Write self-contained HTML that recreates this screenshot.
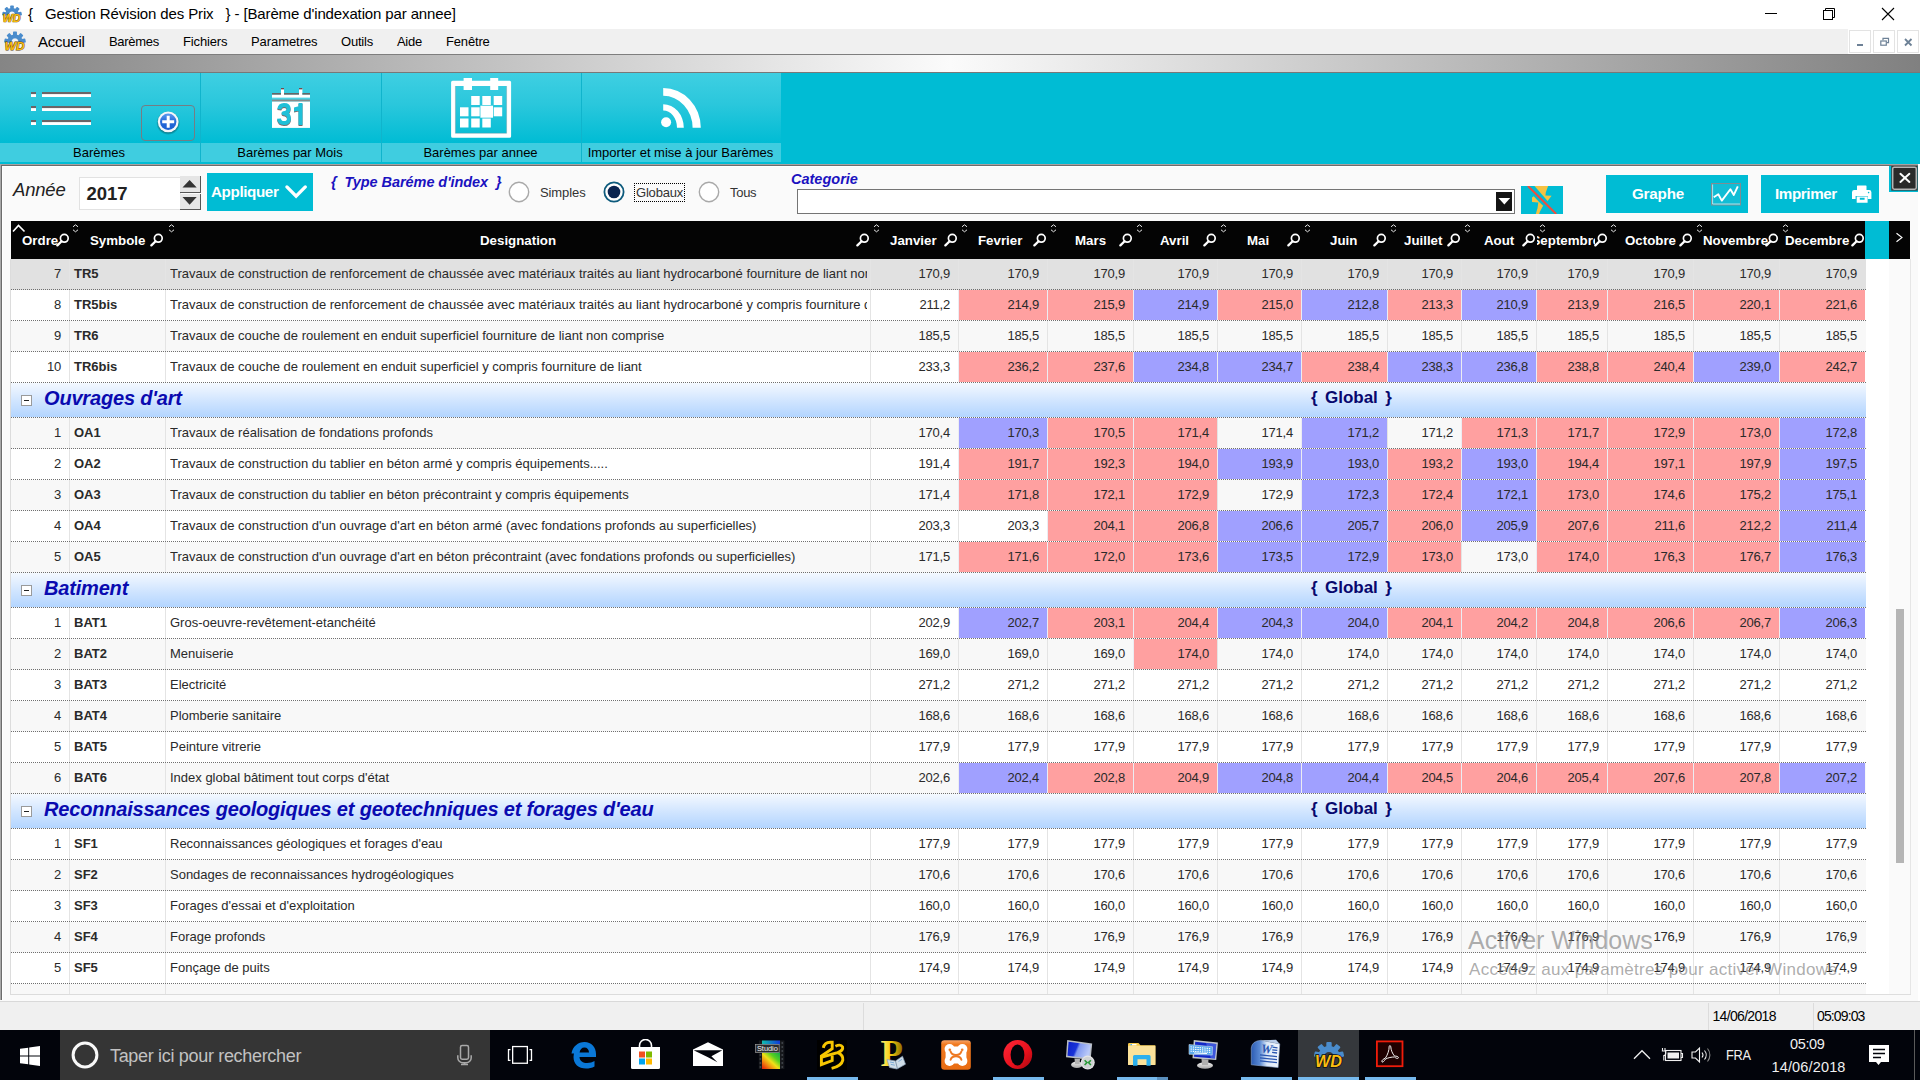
<!DOCTYPE html>
<html><head><meta charset="utf-8"><title>Gestion Revision des Prix</title>
<style>
*{box-sizing:border-box;margin:0;padding:0}
html,body{width:1920px;height:1080px;overflow:hidden;background:#fafafa;font-family:"Liberation Sans",sans-serif;color:#000}
.a{position:absolute}
.t{position:absolute;white-space:nowrap;line-height:1}
/* title */
#title{left:0;top:0;width:1920px;height:29px;background:#fff}
#menu{left:0;top:29px;width:1848px;height:25px;background:#f0f0f0}
#menur{left:1848px;top:29px;width:72px;height:25px;background:#fff}
.mdi{position:absolute;top:30px;width:22px;height:23px;background:#fff;border:1px solid #e3e3e3}
#graybar{left:0;top:54px;width:1920px;height:19px;background:linear-gradient(90deg,#858585 0%,#fbfbfb 49.5%,#808080 100%);border-top:1px solid #7e7e7e;border-bottom:1px solid #787878}
#cyan{left:0;top:73px;width:1920px;height:92px;background:#00bcd4}
/* toolbar */
.tb{position:absolute;top:73px;height:70px;background:linear-gradient(180deg,#3fcfe2 0%,#2ac7dc 45%,#00bcd4 100%)}
.tbl{position:absolute;top:143px;height:19px;background:#3fcde0;text-align:center;font-size:13px;line-height:20.6px;color:#000;padding-right:2px}
/* child window */
#win{left:0;top:164px;width:1920px;height:837px;background:#fafafa}
#status{left:0;top:1001px;width:1920px;height:29px;background:#f0f0f0;border-top:1px solid #d9d9d9}
#taskbar{left:0;top:1030px;width:1920px;height:50px;background:#02040b}

/* table */
#tbl{left:11px;top:221px;width:1855px;height:773px;background:#fff;overflow:hidden}
.r{position:absolute;left:0;width:1855px;height:31px;border-bottom:1px dotted #6f6f6f;font-size:13px;color:#2a2a2a}
.r.o{background:#f8f8f8}.r.s{background:#e1e1e1}
.r i{position:absolute;top:0;height:30px;border-left:1px solid #e4e4e4;font-style:normal;line-height:30.4px;white-space:nowrap;overflow:hidden}
.r .n{text-align:right;padding-right:8px;letter-spacing:-0.2px}
.r .R{background:#ffa0a0}.r .B{background:#a0a0ff}
.r .R,.r .B{border-left-color:#ececf2}
.g{position:absolute;left:0;width:1855px;height:35px;border-bottom:1px dotted #6f6f6f;background:linear-gradient(180deg,#f4f9ff 0%,#eaf3ff 15%,#cfe4ff 55%,#b3d5ff 100%)}
.g b{position:absolute;left:33px;top:5px;font-size:20px;font-style:italic;color:#0a0ab0;line-height:1;white-space:nowrap;letter-spacing:-0.18px}
.g em{position:absolute;left:1300px;top:6px;word-spacing:2.6px;font-size:17px;font-weight:bold;font-style:normal;color:#08086e;line-height:1;white-space:nowrap}
.g u{position:absolute;left:10px;top:12px;width:11px;height:11px;border:1px solid #9a9a9a;background:#fff}
.g u:after{content:"";position:absolute;left:2px;top:4px;width:5px;height:1px;background:#222}
.h{position:absolute;top:234px;font-size:13.3px;font-weight:bold;color:#fff;line-height:1;white-space:nowrap}

</style></head>
<body>
<div class="a" id="title"></div>
<svg class="a" style="left:2.3px;top:5px" width="19.7" height="18" viewBox="1314 1041.500 29.500 26.500" preserveAspectRatio="none"><g fill="#4a8ccc" transform="translate(1329 1057)"><path d="M-11 0a11 11 0 0 1 22 0h-6a5 5 0 0 0-10 0z"/><rect x="-2.700" y="-14.800" width="5.400" height="5.500" rx="1" transform="rotate(-78)"/><rect x="-2.700" y="-14.800" width="5.400" height="5.500" rx="1" transform="rotate(-40)"/><rect x="-2.700" y="-14.800" width="5.400" height="5.500" rx="1" transform="rotate(0)"/><rect x="-2.700" y="-14.800" width="5.400" height="5.500" rx="1" transform="rotate(40)"/><rect x="-2.700" y="-14.800" width="5.400" height="5.500" rx="1" transform="rotate(78)"/></g><circle cx="1329" cy="1055" r="4" fill="#fff" opacity="0.850"/>
<text x="1328.500" y="1067" font-family="Liberation Sans" font-weight="bold" font-style="italic" font-size="15" text-anchor="middle" fill="#f9bc0c" stroke="#5a3e00" stroke-width="1.100" paint-order="stroke" textLength="27" lengthAdjust="spacingAndGlyphs">WD</text></svg>
<div class="t" style="left:28px;top:6.400px;font-size:15px;letter-spacing:-0.13px">{&nbsp;&nbsp;&nbsp;Gestion Révision des Prix&nbsp;&nbsp;&nbsp;} - [Barème d'indexation par annee]</div>
<div class="a" style="left:1765px;top:13px;width:12px;height:1px;background:#000"></div>
<svg class="a" style="left:1822px;top:7px" width="14" height="14" viewBox="0 0 14 14" fill="none" stroke="#000" stroke-width="1"><rect x="1.5" y="3.5" width="9" height="9"/><path d="M3.5 3.5v-2h9v9h-2"/></svg>
<svg class="a" style="left:1881px;top:7px" width="14" height="14" viewBox="0 0 14 14" fill="none" stroke="#000" stroke-width="1.1"><path d="M1 1l12 12M13 1L1 13"/></svg>
<div class="a" id="menu"></div><div class="a" id="menur"></div>
<svg class="a" style="left:4.4px;top:31px" width="21.6" height="20" viewBox="1314 1041.500 29.500 26.500" preserveAspectRatio="none"><g fill="#4a8ccc" transform="translate(1329 1057)"><path d="M-11 0a11 11 0 0 1 22 0h-6a5 5 0 0 0-10 0z"/><rect x="-2.700" y="-14.800" width="5.400" height="5.500" rx="1" transform="rotate(-78)"/><rect x="-2.700" y="-14.800" width="5.400" height="5.500" rx="1" transform="rotate(-40)"/><rect x="-2.700" y="-14.800" width="5.400" height="5.500" rx="1" transform="rotate(0)"/><rect x="-2.700" y="-14.800" width="5.400" height="5.500" rx="1" transform="rotate(40)"/><rect x="-2.700" y="-14.800" width="5.400" height="5.500" rx="1" transform="rotate(78)"/></g><circle cx="1329" cy="1055" r="4" fill="#f4f4f4" opacity="0.850"/>
<text x="1328.500" y="1067" font-family="Liberation Sans" font-weight="bold" font-style="italic" font-size="15" text-anchor="middle" fill="#f9bc0c" stroke="#5a3e00" stroke-width="1.100" paint-order="stroke" textLength="27" lengthAdjust="spacingAndGlyphs">WD</text></svg>
<div class="t" style="left:38px;top:33.5px;font-size:15px;letter-spacing:-0.25px">Accueil</div>
<div class="t" style="left:109px;top:35px;font-size:13px;letter-spacing:-0.3px">Barèmes</div>
<div class="t" style="left:183px;top:35px;font-size:13px;letter-spacing:-0.15px">Fichiers</div>
<div class="t" style="left:251px;top:35px;font-size:13px;letter-spacing:-0.07px">Parametres</div>
<div class="t" style="left:341px;top:35px;font-size:13px;letter-spacing:-0.2px">Outils</div>
<div class="t" style="left:397px;top:35px;font-size:13px;letter-spacing:-0.3px">Aide</div>
<div class="t" style="left:446px;top:35px;font-size:13px;letter-spacing:-0.17px">Fenêtre</div>
<div class="mdi" style="left:1849px"><div class="a" style="left:7px;top:13px;width:6px;height:2px;background:#6d8196"></div></div>
<div class="mdi" style="left:1873px"><svg class="a" style="left:6px;top:6px" width="10" height="10" viewBox="0 0 10 10" fill="none" stroke="#6d8196" stroke-width="1.2"><rect x="0.8" y="4" width="5.5" height="4.2"/><path d="M3 3.2V1.4h5.5v4.2H7"/></svg></div>
<div class="mdi" style="left:1897px"><svg class="a" style="left:6px;top:7px" width="9" height="9" viewBox="0 0 9 9" fill="none" stroke="#6d8196" stroke-width="1.8"><path d="M1 1l6.5 6.5M7.5 1L1 7.5"/></svg></div>
<div class="a" id="graybar"></div>
<div class="a" id="cyan"></div>
<div class="a" id="win"></div>
<div class="a" style="left:0;top:164px;width:1919px;height:1px;background:#a8a0a0"></div>
<div class="a" style="left:1px;top:165px;width:1917px;height:1px;background:#6c6c6c"></div>
<div class="a" style="left:2px;top:166px;width:1916px;height:1px;background:#fff"></div>
<div class="a" style="left:0;top:164px;width:1px;height:836px;background:#a8a8a8"></div>
<div class="a" style="left:1px;top:165px;width:1px;height:835px;background:#6c6c6c"></div>
<div class="a" style="left:2px;top:166px;width:1px;height:834px;background:#fff"></div>
<div class="a" style="left:1918px;top:164px;width:2px;height:837px;background:#fff"></div>
<div class="a" id="status"></div>
<div class="a" style="left:863px;top:1003px;width:1px;height:27px;background:#dcdcdc"></div>
<div class="a" style="left:1708px;top:1003px;width:1px;height:27px;background:#dcdcdc"></div>
<div class="a" style="left:1813px;top:1003px;width:1px;height:27px;background:#dcdcdc"></div>
<div class="t" style="left:1712.500px;top:1009px;font-size:14px;letter-spacing:-0.68px">14/06/2018</div>
<div class="t" style="left:1817px;top:1009px;font-size:14px;letter-spacing:-0.88px">05:09:03</div><div class="tb" style="left:0px;width:200px"></div>
<div class="tbl" style="left:0px;width:200px">Barèmes</div>
<div class="tb" style="left:201px;width:180px"></div>
<div class="tbl" style="left:201px;width:180px">Barèmes par Mois</div>
<div class="tb" style="left:382px;width:199px"></div>
<div class="tbl" style="left:382px;width:199px">Barèmes par annee</div>
<div class="tb" style="left:582px;width:199px"></div>
<div class="tbl" style="left:582px;width:199px">Importer et mise à jour Barèmes</div>
<div class="a" style="left:200px;top:73px;width:1px;height:89px;background:#10b4cc"></div>
<div class="a" style="left:381px;top:73px;width:1px;height:89px;background:#10b4cc"></div>
<div class="a" style="left:581px;top:73px;width:1px;height:89px;background:#10b4cc"></div>
<div class="a" style="left:31px;top:92px;width:5.4px;height:5.4px;background:linear-gradient(180deg,#6a6466 0,#6a6466 30%,#fff 52%,#fff 100%)"></div>
<div class="a" style="left:42px;top:92px;width:49px;height:5.4px;background:linear-gradient(180deg,#6a6466 0,#6a6466 30%,#fff 52%,#fff 100%)"></div>
<div class="a" style="left:31px;top:105.5px;width:5.4px;height:5.4px;background:linear-gradient(180deg,#6a6466 0,#6a6466 30%,#fff 52%,#fff 100%)"></div>
<div class="a" style="left:42px;top:105.5px;width:49px;height:5.4px;background:linear-gradient(180deg,#6a6466 0,#6a6466 30%,#fff 52%,#fff 100%)"></div>
<div class="a" style="left:31px;top:119.5px;width:5.4px;height:5.4px;background:linear-gradient(180deg,#6a6466 0,#6a6466 30%,#fff 52%,#fff 100%)"></div>
<div class="a" style="left:42px;top:119.5px;width:49px;height:5.4px;background:linear-gradient(180deg,#6a6466 0,#6a6466 30%,#fff 52%,#fff 100%)"></div>
<div class="a" style="left:141px;top:105px;width:54px;height:36px;border:1px solid #757d84;border-radius:4px"></div>
<svg class="a" style="left:155px;top:109px" width="26" height="27" viewBox="0 0 26 27">
<defs><linearGradient id="pg" x1="0" y1="0" x2="0" y2="1"><stop offset="0" stop-color="#5b9af0"/><stop offset="0.5" stop-color="#2468d8"/><stop offset="1" stop-color="#1b5fd0"/></linearGradient>
<radialGradient id="ps" cx="0.5" cy="0.5" r="0.5"><stop offset="0.8" stop-color="#000" stop-opacity="0.35"/><stop offset="1" stop-color="#000" stop-opacity="0"/></radialGradient></defs>
<circle cx="13.2" cy="14" r="12" fill="url(#ps)"/>
<circle cx="13.2" cy="12.8" r="10.4" fill="#f4f6fa"/>
<circle cx="13.2" cy="12.8" r="8.2" fill="url(#pg)"/>
<path d="M13.2 6.8v12M7.2 12.8h12" stroke="#fff" stroke-width="3" fill="none"/>
</svg>
<svg class="a" style="left:270px;top:86px" width="44" height="44" viewBox="270 86 44 44">
<rect x="281" y="88" width="3" height="7" fill="#fff"/><rect x="299" y="88" width="3.4" height="7" fill="#fff"/>
<rect x="281" y="88" width="3" height="1.4" fill="#6b4e50"/><rect x="299" y="88" width="3.4" height="1.4" fill="#6b4e50"/>
<rect x="272" y="93" width="9" height="1.8" fill="#666"/><rect x="284" y="93" width="15" height="1.8" fill="#666"/><rect x="302.4" y="93" width="7.6" height="1.8" fill="#666"/>
<rect x="272" y="94.8" width="38" height="3" fill="#fff"/>
<rect x="272" y="97.8" width="38" height="1.8" fill="#4fd2e4"/>
<rect x="272" y="99.6" width="38" height="2" fill="#8a8a8a"/>
<rect x="272" y="101.6" width="38" height="26.3" fill="#fff"/>
<g fill="none" stroke-width="4" stroke-linejoin="round"><path id="d3" d="M279.300 109.300Q279.800 105 284 105Q288.600 105 288.600 108.800Q288.600 112.600 283.500 113.300Q289 113.800 289 118.400Q289 123 284 123Q279.400 123 279 118.600" stroke="#756a6c" transform="translate(0 1)"/><path d="M279.300 109.300Q279.800 105 284 105Q288.600 105 288.600 108.800Q288.600 112.600 283.500 113.300Q289 113.800 289 118.400Q289 123 284 123Q279.400 123 279 118.600" stroke="#1fc0d8"/></g>
<path d="M298.500 104h4v22h-4zM294 108.200l4.500-1.200v4.600l-4.500 .800z" fill="#756a6c"/><path d="M298.500 103h4v22h-4zM294 107.400l4.500-1.200v4.600l-4.500 .800z" fill="#1fc0d8"/>
</svg>
<svg class="a" style="left:445px;top:74px" width="72" height="68" viewBox="445 74 72 68">
<g fill="#fff"><path fill-rule="evenodd" d="M452.6 80.8h57a1.5 1.5 0 0 1 1.5 1.5v54a1.5 1.5 0 0 1-1.5 1.5h-57a1.5 1.5 0 0 1-1.5-1.5v-54a1.5 1.5 0 0 1 1.5-1.5zM455.4 86v47.3h51.2V86z"/>
<rect x="463.6" y="78" width="8.4" height="12"/><rect x="490.2" y="78" width="8" height="12"/>
<rect x="471.2" y="96" width="8.5" height="9"/><rect x="482.3" y="96" width="8.5" height="9"/><rect x="493.7" y="96" width="8.5" height="9"/><rect x="460" y="107.3" width="8.5" height="9"/><rect x="471.2" y="107.3" width="8.5" height="9"/><rect x="493.7" y="107.3" width="8.5" height="9"/><rect x="460" y="118.5" width="8.5" height="9"/><rect x="471.2" y="118.5" width="8.5" height="9"/><rect x="482.3" y="118.5" width="8.5" height="9"/><rect x="480.4" y="105.7" width="12.6" height="12"/></g>
<path d="M455.4 86v47.3h51.2V86" fill="none" stroke="#7a8a90" stroke-width="0.5" opacity="0.7"/>
</svg>
<svg class="a" style="left:656px;top:84px" width="50" height="48" viewBox="656 84 50 48" fill="#fff">
<circle cx="666.1" cy="122.2" r="5"/>
<path d="M663.200 88A37.600 39.800 0 0 1 700.800 127.800L692.600 127.800A29.400 32 0 0 0 663.200 95.800Z"/>
<path d="M663.200 104.200A20.600 23.600 0 0 1 683.800 127.800L677 127.800A13.800 17.300 0 0 0 663.200 110.500Z"/>
</svg><div class="t" style="left:13px;top:181px;font-size:18.5px;font-style:italic;color:#222;letter-spacing:-0.2px">Année</div>
<div class="a" style="left:79px;top:177px;width:102px;height:33px;background:#fff;border:1px solid #e2e2e2"></div>
<div class="t" style="left:86.5px;top:185px;font-size:18.5px;font-weight:bold;color:#222">2017</div>
<div class="a" style="left:180px;top:176px;width:21px;height:17px;background:#e5e5e5;border-right:1px solid #555;border-bottom:1px solid #555"></div>
<div class="a" style="left:180px;top:194px;width:21px;height:16px;background:#e5e5e5;border-right:1px solid #555;border-bottom:1px solid #555"></div>
<svg class="a" style="left:180px;top:176px" width="21" height="34" viewBox="0 0 21 34"><path d="M2.5 11.5L9.6 4l7.1 7.5zM2.5 21h14.2L9.6 28.7z" fill="#333"/></svg>
<div class="a" style="left:207px;top:173px;width:106px;height:38px;background:#00bcd4"></div>
<div class="t" style="left:211px;top:184px;font-size:15.2px;font-weight:bold;color:#fff;letter-spacing:-0.38px">Appliquer</div>
<svg class="a" style="left:284px;top:182px" width="24" height="18" viewBox="0 0 24 18"><path d="M2.900 4.900L12.100 14.200L21.300 4.900" fill="none" stroke="#fff" stroke-width="3.300" stroke-linecap="round" stroke-linejoin="miter"/></svg>
<div class="t" style="left:331px;top:175px;font-size:14.5px;font-weight:bold;font-style:italic;color:#1a12c0;letter-spacing:-0.06px">{&nbsp; Type Baréme d'index&nbsp; }</div>
<svg class="a" style="left:506.5px;top:180px" width="24" height="24" viewBox="0 0 24 24"><circle cx="12" cy="12" r="9.7" fill="#fff" stroke="#a9a9a9" stroke-width="1.4"/></svg>
<div class="t" style="left:540px;top:186px;font-size:13px;color:#333;letter-spacing:-0.1px">Simples</div>
<svg class="a" style="left:601.5px;top:180px" width="24" height="24" viewBox="0 0 24 24"><circle cx="12" cy="12" r="9.6" fill="#fff" stroke="#0d5a7c" stroke-width="1.8"/><circle cx="12" cy="12" r="6.300" fill="#0a2450"/></svg>
<div class="a" style="left:634px;top:183px;width:51px;height:19px;border:1px dotted #000"></div>
<div class="t" style="left:636px;top:186px;font-size:13px;color:#333;letter-spacing:-0.2px">Globaux</div>
<svg class="a" style="left:696.5px;top:180px" width="24" height="24" viewBox="0 0 24 24"><circle cx="12" cy="12" r="9.7" fill="#fff" stroke="#a9a9a9" stroke-width="1.4"/></svg>
<div class="t" style="left:730px;top:186px;font-size:13px;color:#333;letter-spacing:-0.3px">Tous</div>
<div class="t" style="left:791px;top:172px;font-size:14.5px;font-weight:bold;font-style:italic;color:#1a12c0">Categorie</div>
<div class="a" style="left:797px;top:189px;width:718px;height:25px;background:#fff;border:1px solid #747474"></div>
<div class="a" style="left:1496px;top:192px;width:16px;height:19px;background:#141414"></div>
<svg class="a" style="left:1496px;top:192px" width="17" height="19" viewBox="0 0 17 19"><path d="M2.500 5.900h11.700l-5.850 6.500z" fill="#fff"/></svg>
<svg class="a" style="left:1521px;top:186px" width="42" height="28" viewBox="0 0 42 28"><rect width="42" height="28" fill="#00bcd4"/>
<path d="M13.500 0L27.100 0L24.800 6.500L24.400 9.400L30.600 9.800L26.600 15Z" fill="#f5c242"/>
<path d="M11 11.600L12.700 10.300L18.100 16L22.100 19.800L19 25.600L18.100 28L14.800 28L16.500 22.300L17.300 16.600L11 16Z" fill="#f5c242"/>
<path d="M6.900 0L35.200 28" stroke="#f04c3c" stroke-width="2"/></svg>
<div class="a" style="left:1606px;top:175px;width:142px;height:38px;background:#00bcd4"></div>
<div class="t" style="left:1632px;top:186px;font-size:15.2px;font-weight:bold;color:#fff;letter-spacing:-0.2px">Graphe</div>
<svg class="a" style="left:1711px;top:183px" width="30" height="23" viewBox="1711 183 30 23"><rect x="1711.500" y="183.500" width="29" height="21.500" fill="#12bdd5" stroke="#7f8c92" stroke-width="1"/><path d="M1712.600 184.500v19.500h27.500" fill="none" stroke="#d8eef2" stroke-width="0.800"/>
<path d="M1713.750 197.200L1718.300 194.300L1721.800 200.600L1730.400 189.200L1733.800 194.900L1737.800 186.300" fill="none" stroke="#fff" stroke-width="1.900" stroke-linejoin="round"/></svg>
<div class="a" style="left:1761px;top:175px;width:118px;height:38px;background:#00bcd4"></div>
<div class="t" style="left:1775px;top:186px;font-size:15.2px;font-weight:bold;color:#fff;letter-spacing:-0.4px">Imprimer</div>
<svg class="a" style="left:1851px;top:184px" width="22" height="20" viewBox="1851 184 22 20" fill="#fff"><rect x="1857" y="185.500" width="9.500" height="5" rx="0.600"/>
<path d="M1854.200 190h15a2.200 2.200 0 0 1 2.200 2.200v6.800h-3.600v-3h-12.200v3h-3.600v-6.800a2.200 2.200 0 0 1 2.200-2.200z"/><path d="M1856.700 196.500h10.900v6.200h-10.900zM1859.800 197.800v2h4.800v-2z" fill-rule="evenodd"/><circle cx="1868.600" cy="192.600" r="0.800" fill="#00bcd4"/></svg>
<svg class="a" style="left:1889px;top:165px" width="30" height="28" viewBox="1889 165 30 28"><rect x="1889" y="166" width="29" height="26" fill="#00bcd4"/><rect x="1891.250" y="166" width="26.450" height="24.600" fill="#3a3636"/><rect x="1892.700" y="167.200" width="23.600" height="22" rx="1.600" fill="#2b2b2b" stroke="#b6b6b6" stroke-width="1.500"/><path d="M1900.400 173.800L1909.400 181.900M1909.400 173.800L1900.400 181.900" stroke="#fff" stroke-width="2" stroke-linecap="round"/></svg><div class="a" style="left:11px;top:221px;width:1855px;height:38px;background:#040404"></div>
<div class="a" style="left:1865px;top:221px;width:24px;height:38px;background:#00bcd4"></div>
<div class="a" style="left:1889px;top:221px;width:21px;height:38px;background:#040404"></div>
<svg class="a" style="left:1894.5px;top:232.3px" width="9" height="11" viewBox="0 0 9 11"><path d="M1.5 1.2L7 5.5 1.5 9.8" fill="none" stroke="#fff" stroke-width="1.1"/></svg>
<div class="a" style="left:1866px;top:259px;width:23px;height:735px;background:#fff"></div>
<div class="a" style="left:1910px;top:259px;width:1px;height:735px;background:#e6e6e6"></div>
<div class="a" style="left:1896px;top:609px;width:7.5px;height:254px;background:#b5b5b5"></div>
<div class="a" style="left:1866px;top:994px;width:45px;height:1px;background:#dedede"></div>
<div class="h" style="left:22px">Ordre</div>
<div class="h" style="left:90px">Symbole</div>
<div class="h" style="left:480px">Designation</div>
<div class="h" style="left:890px">Janvier</div>
<div class="h" style="left:978px">Fevrier</div>
<div class="h" style="left:1075px">Mars</div>
<div class="h" style="left:1160px">Avril</div>
<div class="h" style="left:1247px">Mai</div>
<div class="h" style="left:1330px">Juin</div>
<div class="h" style="left:1404px">Juillet</div>
<div class="h" style="left:1484px">Aout</div>
<div class="h" style="left:1537px;width:58px;height:16px;overflow:hidden"><span style="margin-left:-5.5px">Septembre</span></div>
<div class="h" style="left:1625px">Octobre</div>
<div class="h" style="left:1703px">Novembre</div>
<div class="h" style="left:1785px">Decembre</div>
<svg class="a" style="left:11.500px;top:223.800px" width="14" height="9" viewBox="0 0 14 9"><path d="M1 7.5L6.5 1.5 12.5 7.5" fill="none" stroke="#fff" stroke-width="1.6"/></svg>
<svg class="a" style="left:56px;top:233px" width="14" height="14" viewBox="0 0 14 14"><circle cx="8.3" cy="5.3" r="3.9" fill="none" stroke="#fff" stroke-width="1.7"/><path d="M5.6 8.2L1.4 12.4" stroke="#fff" stroke-width="2.3" stroke-linecap="round"/></svg>
<svg class="a" style="left:150px;top:233px" width="14" height="14" viewBox="0 0 14 14"><circle cx="8.3" cy="5.3" r="3.9" fill="none" stroke="#fff" stroke-width="1.7"/><path d="M5.6 8.2L1.4 12.4" stroke="#fff" stroke-width="2.3" stroke-linecap="round"/></svg>
<svg class="a" style="left:856px;top:233px" width="14" height="14" viewBox="0 0 14 14"><circle cx="8.3" cy="5.3" r="3.9" fill="none" stroke="#fff" stroke-width="1.7"/><path d="M5.6 8.2L1.4 12.4" stroke="#fff" stroke-width="2.3" stroke-linecap="round"/></svg>
<svg class="a" style="left:944px;top:233px" width="14" height="14" viewBox="0 0 14 14"><circle cx="8.3" cy="5.3" r="3.9" fill="none" stroke="#fff" stroke-width="1.7"/><path d="M5.6 8.2L1.4 12.4" stroke="#fff" stroke-width="2.3" stroke-linecap="round"/></svg>
<svg class="a" style="left:1033px;top:233px" width="14" height="14" viewBox="0 0 14 14"><circle cx="8.3" cy="5.3" r="3.9" fill="none" stroke="#fff" stroke-width="1.7"/><path d="M5.6 8.2L1.4 12.4" stroke="#fff" stroke-width="2.3" stroke-linecap="round"/></svg>
<svg class="a" style="left:1119px;top:233px" width="14" height="14" viewBox="0 0 14 14"><circle cx="8.3" cy="5.3" r="3.9" fill="none" stroke="#fff" stroke-width="1.7"/><path d="M5.6 8.2L1.4 12.4" stroke="#fff" stroke-width="2.3" stroke-linecap="round"/></svg>
<svg class="a" style="left:1203px;top:233px" width="14" height="14" viewBox="0 0 14 14"><circle cx="8.3" cy="5.3" r="3.9" fill="none" stroke="#fff" stroke-width="1.7"/><path d="M5.6 8.2L1.4 12.4" stroke="#fff" stroke-width="2.3" stroke-linecap="round"/></svg>
<svg class="a" style="left:1287px;top:233px" width="14" height="14" viewBox="0 0 14 14"><circle cx="8.3" cy="5.3" r="3.9" fill="none" stroke="#fff" stroke-width="1.7"/><path d="M5.6 8.2L1.4 12.4" stroke="#fff" stroke-width="2.3" stroke-linecap="round"/></svg>
<svg class="a" style="left:1373px;top:233px" width="14" height="14" viewBox="0 0 14 14"><circle cx="8.3" cy="5.3" r="3.9" fill="none" stroke="#fff" stroke-width="1.7"/><path d="M5.6 8.2L1.4 12.4" stroke="#fff" stroke-width="2.3" stroke-linecap="round"/></svg>
<svg class="a" style="left:1447px;top:233px" width="14" height="14" viewBox="0 0 14 14"><circle cx="8.3" cy="5.3" r="3.9" fill="none" stroke="#fff" stroke-width="1.7"/><path d="M5.6 8.2L1.4 12.4" stroke="#fff" stroke-width="2.3" stroke-linecap="round"/></svg>
<svg class="a" style="left:1522px;top:233px" width="14" height="14" viewBox="0 0 14 14"><circle cx="8.3" cy="5.3" r="3.9" fill="none" stroke="#fff" stroke-width="1.7"/><path d="M5.6 8.2L1.4 12.4" stroke="#fff" stroke-width="2.3" stroke-linecap="round"/></svg>
<svg class="a" style="left:1594px;top:233px" width="14" height="14" viewBox="0 0 14 14"><circle cx="8.3" cy="5.3" r="3.9" fill="none" stroke="#fff" stroke-width="1.7"/><path d="M5.6 8.2L1.4 12.4" stroke="#fff" stroke-width="2.3" stroke-linecap="round"/></svg>
<svg class="a" style="left:1679px;top:233px" width="14" height="14" viewBox="0 0 14 14"><circle cx="8.3" cy="5.3" r="3.9" fill="none" stroke="#fff" stroke-width="1.7"/><path d="M5.6 8.2L1.4 12.4" stroke="#fff" stroke-width="2.3" stroke-linecap="round"/></svg>
<svg class="a" style="left:1765px;top:233px" width="14" height="14" viewBox="0 0 14 14"><circle cx="8.3" cy="5.3" r="3.9" fill="none" stroke="#fff" stroke-width="1.7"/><path d="M5.6 8.2L1.4 12.4" stroke="#fff" stroke-width="2.3" stroke-linecap="round"/></svg>
<svg class="a" style="left:1851px;top:233px" width="14" height="14" viewBox="0 0 14 14"><circle cx="8.3" cy="5.3" r="3.9" fill="none" stroke="#fff" stroke-width="1.7"/><path d="M5.6 8.2L1.4 12.4" stroke="#fff" stroke-width="2.3" stroke-linecap="round"/></svg>
<svg class="a" style="left:72px;top:224px" width="7" height="9" viewBox="0 0 7 9"><path d="M1 2.8L3.5 0.8 6 2.8M1 5.8L3.5 7.8 6 5.8" fill="none" stroke="#e8e8e8" stroke-width="1"/></svg>
<svg class="a" style="left:168px;top:224px" width="7" height="9" viewBox="0 0 7 9"><path d="M1 2.8L3.5 0.8 6 2.8M1 5.8L3.5 7.8 6 5.8" fill="none" stroke="#e8e8e8" stroke-width="1"/></svg>
<svg class="a" style="left:873px;top:224px" width="7" height="9" viewBox="0 0 7 9"><path d="M1 2.8L3.5 0.8 6 2.8M1 5.8L3.5 7.8 6 5.8" fill="none" stroke="#e8e8e8" stroke-width="1"/></svg>
<svg class="a" style="left:961px;top:224px" width="7" height="9" viewBox="0 0 7 9"><path d="M1 2.8L3.5 0.8 6 2.8M1 5.8L3.5 7.8 6 5.8" fill="none" stroke="#e8e8e8" stroke-width="1"/></svg>
<svg class="a" style="left:1050px;top:224px" width="7" height="9" viewBox="0 0 7 9"><path d="M1 2.8L3.5 0.8 6 2.8M1 5.8L3.5 7.8 6 5.8" fill="none" stroke="#e8e8e8" stroke-width="1"/></svg>
<svg class="a" style="left:1136px;top:224px" width="7" height="9" viewBox="0 0 7 9"><path d="M1 2.8L3.5 0.8 6 2.8M1 5.8L3.5 7.8 6 5.8" fill="none" stroke="#e8e8e8" stroke-width="1"/></svg>
<svg class="a" style="left:1220px;top:224px" width="7" height="9" viewBox="0 0 7 9"><path d="M1 2.8L3.5 0.8 6 2.8M1 5.8L3.5 7.8 6 5.8" fill="none" stroke="#e8e8e8" stroke-width="1"/></svg>
<svg class="a" style="left:1304px;top:224px" width="7" height="9" viewBox="0 0 7 9"><path d="M1 2.8L3.5 0.8 6 2.8M1 5.8L3.5 7.8 6 5.8" fill="none" stroke="#e8e8e8" stroke-width="1"/></svg>
<svg class="a" style="left:1390px;top:224px" width="7" height="9" viewBox="0 0 7 9"><path d="M1 2.8L3.5 0.8 6 2.8M1 5.8L3.5 7.8 6 5.8" fill="none" stroke="#e8e8e8" stroke-width="1"/></svg>
<svg class="a" style="left:1464px;top:224px" width="7" height="9" viewBox="0 0 7 9"><path d="M1 2.8L3.5 0.8 6 2.8M1 5.8L3.5 7.8 6 5.8" fill="none" stroke="#e8e8e8" stroke-width="1"/></svg>
<svg class="a" style="left:1539px;top:224px" width="7" height="9" viewBox="0 0 7 9"><path d="M1 2.8L3.5 0.8 6 2.8M1 5.8L3.5 7.8 6 5.8" fill="none" stroke="#e8e8e8" stroke-width="1"/></svg>
<svg class="a" style="left:1610px;top:224px" width="7" height="9" viewBox="0 0 7 9"><path d="M1 2.8L3.5 0.8 6 2.8M1 5.8L3.5 7.8 6 5.8" fill="none" stroke="#e8e8e8" stroke-width="1"/></svg>
<svg class="a" style="left:1696px;top:224px" width="7" height="9" viewBox="0 0 7 9"><path d="M1 2.8L3.5 0.8 6 2.8M1 5.8L3.5 7.8 6 5.8" fill="none" stroke="#e8e8e8" stroke-width="1"/></svg>
<svg class="a" style="left:1782px;top:224px" width="7" height="9" viewBox="0 0 7 9"><path d="M1 2.8L3.5 0.8 6 2.8M1 5.8L3.5 7.8 6 5.8" fill="none" stroke="#e8e8e8" stroke-width="1"/></svg>
<div class="a" id="tbl" style="left:10px;top:259px;width:1856px;height:736px;border-left:1px solid #dcdcdc;border-bottom:1px solid #dcdcdc">
<div class="r s" style="top:0px"><i class="n" style="left:0px;width:58px;border-left:0;padding-right:8px">7</i><i style="left:58px;width:96px;padding-left:4px"><b>TR5</b></i><i style="left:154px;width:705px;padding-left:4px"><span style="display:block;width:697px;overflow:hidden;letter-spacing:-0.005px">Travaux de construction de renforcement de chaussée avec matériaux traités au liant hydrocarboné fourniture de liant non comprise</span></i><i class="n" style="left:859px;width:88px">170,9</i><i class="n" style="left:947px;width:89px">170,9</i><i class="n" style="left:1036px;width:86px">170,9</i><i class="n" style="left:1122px;width:84px">170,9</i><i class="n" style="left:1206px;width:84px">170,9</i><i class="n" style="left:1290px;width:86px">170,9</i><i class="n" style="left:1376px;width:74px">170,9</i><i class="n" style="left:1450px;width:75px">170,9</i><i class="n" style="left:1525px;width:71px">170,9</i><i class="n" style="left:1596px;width:86px">170,9</i><i class="n" style="left:1682px;width:86px">170,9</i><i class="n" style="left:1768px;width:86px">170,9</i></div>
<div class="r" style="top:31px"><i class="n" style="left:0px;width:58px;border-left:0;padding-right:8px">8</i><i style="left:58px;width:96px;padding-left:4px"><b>TR5bis</b></i><i style="left:154px;width:705px;padding-left:4px"><span style="display:block;width:697px;overflow:hidden;letter-spacing:-0.005px">Travaux de construction de renforcement de chaussée avec matériaux traités au liant hydrocarboné y compris fourniture de liant</span></i><i class="n" style="left:859px;width:88px">211,2</i><i class="n R" style="left:947px;width:89px">214,9</i><i class="n R" style="left:1036px;width:86px">215,9</i><i class="n B" style="left:1122px;width:84px">214,9</i><i class="n R" style="left:1206px;width:84px">215,0</i><i class="n B" style="left:1290px;width:86px">212,8</i><i class="n R" style="left:1376px;width:74px">213,3</i><i class="n B" style="left:1450px;width:75px">210,9</i><i class="n R" style="left:1525px;width:71px">213,9</i><i class="n R" style="left:1596px;width:86px">216,5</i><i class="n R" style="left:1682px;width:86px">220,1</i><i class="n R" style="left:1768px;width:86px">221,6</i></div>
<div class="r o" style="top:62px"><i class="n" style="left:0px;width:58px;border-left:0;padding-right:8px">9</i><i style="left:58px;width:96px;padding-left:4px"><b>TR6</b></i><i style="left:154px;width:705px;padding-left:4px"><span style="display:block;width:697px;overflow:hidden;letter-spacing:-0.005px">Travaux de couche de roulement en enduit superficiel fourniture de liant non comprise</span></i><i class="n" style="left:859px;width:88px">185,5</i><i class="n" style="left:947px;width:89px">185,5</i><i class="n" style="left:1036px;width:86px">185,5</i><i class="n" style="left:1122px;width:84px">185,5</i><i class="n" style="left:1206px;width:84px">185,5</i><i class="n" style="left:1290px;width:86px">185,5</i><i class="n" style="left:1376px;width:74px">185,5</i><i class="n" style="left:1450px;width:75px">185,5</i><i class="n" style="left:1525px;width:71px">185,5</i><i class="n" style="left:1596px;width:86px">185,5</i><i class="n" style="left:1682px;width:86px">185,5</i><i class="n" style="left:1768px;width:86px">185,5</i></div>
<div class="r" style="top:93px"><i class="n" style="left:0px;width:58px;border-left:0;padding-right:8px">10</i><i style="left:58px;width:96px;padding-left:4px"><b>TR6bis</b></i><i style="left:154px;width:705px;padding-left:4px"><span style="display:block;width:697px;overflow:hidden;letter-spacing:-0.005px">Travaux de couche de roulement en enduit superficiel y compris fourniture de liant</span></i><i class="n" style="left:859px;width:88px">233,3</i><i class="n R" style="left:947px;width:89px">236,2</i><i class="n R" style="left:1036px;width:86px">237,6</i><i class="n B" style="left:1122px;width:84px">234,8</i><i class="n B" style="left:1206px;width:84px">234,7</i><i class="n R" style="left:1290px;width:86px">238,4</i><i class="n B" style="left:1376px;width:74px">238,3</i><i class="n B" style="left:1450px;width:75px">236,8</i><i class="n R" style="left:1525px;width:71px">238,8</i><i class="n R" style="left:1596px;width:86px">240,4</i><i class="n B" style="left:1682px;width:86px">239,0</i><i class="n R" style="left:1768px;width:86px">242,7</i></div>
<div class="g" style="top:124px"><u></u><b>Ouvrages d'art</b><em>{ Global }</em></div>
<div class="r o" style="top:159px"><i class="n" style="left:0px;width:58px;border-left:0;padding-right:8px">1</i><i style="left:58px;width:96px;padding-left:4px"><b>OA1</b></i><i style="left:154px;width:705px;padding-left:4px"><span style="display:block;width:697px;overflow:hidden;letter-spacing:-0.005px">Travaux de réalisation de fondations profonds</span></i><i class="n" style="left:859px;width:88px">170,4</i><i class="n B" style="left:947px;width:89px">170,3</i><i class="n R" style="left:1036px;width:86px">170,5</i><i class="n R" style="left:1122px;width:84px">171,4</i><i class="n" style="left:1206px;width:84px">171,4</i><i class="n B" style="left:1290px;width:86px">171,2</i><i class="n" style="left:1376px;width:74px">171,2</i><i class="n R" style="left:1450px;width:75px">171,3</i><i class="n R" style="left:1525px;width:71px">171,7</i><i class="n R" style="left:1596px;width:86px">172,9</i><i class="n R" style="left:1682px;width:86px">173,0</i><i class="n B" style="left:1768px;width:86px">172,8</i></div>
<div class="r" style="top:190px"><i class="n" style="left:0px;width:58px;border-left:0;padding-right:8px">2</i><i style="left:58px;width:96px;padding-left:4px"><b>OA2</b></i><i style="left:154px;width:705px;padding-left:4px"><span style="display:block;width:697px;overflow:hidden;letter-spacing:-0.005px">Travaux de construction du tablier en béton armé y compris équipements.....</span></i><i class="n" style="left:859px;width:88px">191,4</i><i class="n R" style="left:947px;width:89px">191,7</i><i class="n R" style="left:1036px;width:86px">192,3</i><i class="n R" style="left:1122px;width:84px">194,0</i><i class="n B" style="left:1206px;width:84px">193,9</i><i class="n B" style="left:1290px;width:86px">193,0</i><i class="n R" style="left:1376px;width:74px">193,2</i><i class="n B" style="left:1450px;width:75px">193,0</i><i class="n R" style="left:1525px;width:71px">194,4</i><i class="n R" style="left:1596px;width:86px">197,1</i><i class="n R" style="left:1682px;width:86px">197,9</i><i class="n B" style="left:1768px;width:86px">197,5</i></div>
<div class="r o" style="top:221px"><i class="n" style="left:0px;width:58px;border-left:0;padding-right:8px">3</i><i style="left:58px;width:96px;padding-left:4px"><b>OA3</b></i><i style="left:154px;width:705px;padding-left:4px"><span style="display:block;width:697px;overflow:hidden;letter-spacing:-0.005px">Travaux de construction du tablier en béton précontraint y compris équipements</span></i><i class="n" style="left:859px;width:88px">171,4</i><i class="n R" style="left:947px;width:89px">171,8</i><i class="n R" style="left:1036px;width:86px">172,1</i><i class="n R" style="left:1122px;width:84px">172,9</i><i class="n" style="left:1206px;width:84px">172,9</i><i class="n B" style="left:1290px;width:86px">172,3</i><i class="n R" style="left:1376px;width:74px">172,4</i><i class="n B" style="left:1450px;width:75px">172,1</i><i class="n R" style="left:1525px;width:71px">173,0</i><i class="n R" style="left:1596px;width:86px">174,6</i><i class="n R" style="left:1682px;width:86px">175,2</i><i class="n B" style="left:1768px;width:86px">175,1</i></div>
<div class="r" style="top:252px"><i class="n" style="left:0px;width:58px;border-left:0;padding-right:8px">4</i><i style="left:58px;width:96px;padding-left:4px"><b>OA4</b></i><i style="left:154px;width:705px;padding-left:4px"><span style="display:block;width:697px;overflow:hidden;letter-spacing:-0.005px">Travaux de construction d'un ouvrage d'art en béton armé (avec fondations profonds au superficielles)</span></i><i class="n" style="left:859px;width:88px">203,3</i><i class="n" style="left:947px;width:89px">203,3</i><i class="n R" style="left:1036px;width:86px">204,1</i><i class="n R" style="left:1122px;width:84px">206,8</i><i class="n B" style="left:1206px;width:84px">206,6</i><i class="n B" style="left:1290px;width:86px">205,7</i><i class="n R" style="left:1376px;width:74px">206,0</i><i class="n B" style="left:1450px;width:75px">205,9</i><i class="n R" style="left:1525px;width:71px">207,6</i><i class="n R" style="left:1596px;width:86px">211,6</i><i class="n R" style="left:1682px;width:86px">212,2</i><i class="n B" style="left:1768px;width:86px">211,4</i></div>
<div class="r o" style="top:283px"><i class="n" style="left:0px;width:58px;border-left:0;padding-right:8px">5</i><i style="left:58px;width:96px;padding-left:4px"><b>OA5</b></i><i style="left:154px;width:705px;padding-left:4px"><span style="display:block;width:697px;overflow:hidden;letter-spacing:-0.005px">Travaux de construction d'un ouvrage d'art en béton précontraint (avec fondations profonds ou superficielles)</span></i><i class="n" style="left:859px;width:88px">171,5</i><i class="n R" style="left:947px;width:89px">171,6</i><i class="n R" style="left:1036px;width:86px">172,0</i><i class="n R" style="left:1122px;width:84px">173,6</i><i class="n B" style="left:1206px;width:84px">173,5</i><i class="n B" style="left:1290px;width:86px">172,9</i><i class="n R" style="left:1376px;width:74px">173,0</i><i class="n" style="left:1450px;width:75px">173,0</i><i class="n R" style="left:1525px;width:71px">174,0</i><i class="n R" style="left:1596px;width:86px">176,3</i><i class="n R" style="left:1682px;width:86px">176,7</i><i class="n B" style="left:1768px;width:86px">176,3</i></div>
<div class="g" style="top:314px"><u></u><b>Batiment</b><em>{ Global }</em></div>
<div class="r" style="top:349px"><i class="n" style="left:0px;width:58px;border-left:0;padding-right:8px">1</i><i style="left:58px;width:96px;padding-left:4px"><b>BAT1</b></i><i style="left:154px;width:705px;padding-left:4px"><span style="display:block;width:697px;overflow:hidden;letter-spacing:-0.005px">Gros-oeuvre-revêtement-etanchéité</span></i><i class="n" style="left:859px;width:88px">202,9</i><i class="n B" style="left:947px;width:89px">202,7</i><i class="n R" style="left:1036px;width:86px">203,1</i><i class="n R" style="left:1122px;width:84px">204,4</i><i class="n B" style="left:1206px;width:84px">204,3</i><i class="n B" style="left:1290px;width:86px">204,0</i><i class="n R" style="left:1376px;width:74px">204,1</i><i class="n R" style="left:1450px;width:75px">204,2</i><i class="n R" style="left:1525px;width:71px">204,8</i><i class="n R" style="left:1596px;width:86px">206,6</i><i class="n R" style="left:1682px;width:86px">206,7</i><i class="n B" style="left:1768px;width:86px">206,3</i></div>
<div class="r o" style="top:380px"><i class="n" style="left:0px;width:58px;border-left:0;padding-right:8px">2</i><i style="left:58px;width:96px;padding-left:4px"><b>BAT2</b></i><i style="left:154px;width:705px;padding-left:4px"><span style="display:block;width:697px;overflow:hidden;letter-spacing:-0.005px">Menuiserie</span></i><i class="n" style="left:859px;width:88px">169,0</i><i class="n" style="left:947px;width:89px">169,0</i><i class="n" style="left:1036px;width:86px">169,0</i><i class="n R" style="left:1122px;width:84px">174,0</i><i class="n" style="left:1206px;width:84px">174,0</i><i class="n" style="left:1290px;width:86px">174,0</i><i class="n" style="left:1376px;width:74px">174,0</i><i class="n" style="left:1450px;width:75px">174,0</i><i class="n" style="left:1525px;width:71px">174,0</i><i class="n" style="left:1596px;width:86px">174,0</i><i class="n" style="left:1682px;width:86px">174,0</i><i class="n" style="left:1768px;width:86px">174,0</i></div>
<div class="r" style="top:411px"><i class="n" style="left:0px;width:58px;border-left:0;padding-right:8px">3</i><i style="left:58px;width:96px;padding-left:4px"><b>BAT3</b></i><i style="left:154px;width:705px;padding-left:4px"><span style="display:block;width:697px;overflow:hidden;letter-spacing:-0.005px">Electricité</span></i><i class="n" style="left:859px;width:88px">271,2</i><i class="n" style="left:947px;width:89px">271,2</i><i class="n" style="left:1036px;width:86px">271,2</i><i class="n" style="left:1122px;width:84px">271,2</i><i class="n" style="left:1206px;width:84px">271,2</i><i class="n" style="left:1290px;width:86px">271,2</i><i class="n" style="left:1376px;width:74px">271,2</i><i class="n" style="left:1450px;width:75px">271,2</i><i class="n" style="left:1525px;width:71px">271,2</i><i class="n" style="left:1596px;width:86px">271,2</i><i class="n" style="left:1682px;width:86px">271,2</i><i class="n" style="left:1768px;width:86px">271,2</i></div>
<div class="r o" style="top:442px"><i class="n" style="left:0px;width:58px;border-left:0;padding-right:8px">4</i><i style="left:58px;width:96px;padding-left:4px"><b>BAT4</b></i><i style="left:154px;width:705px;padding-left:4px"><span style="display:block;width:697px;overflow:hidden;letter-spacing:-0.005px">Plomberie sanitaire</span></i><i class="n" style="left:859px;width:88px">168,6</i><i class="n" style="left:947px;width:89px">168,6</i><i class="n" style="left:1036px;width:86px">168,6</i><i class="n" style="left:1122px;width:84px">168,6</i><i class="n" style="left:1206px;width:84px">168,6</i><i class="n" style="left:1290px;width:86px">168,6</i><i class="n" style="left:1376px;width:74px">168,6</i><i class="n" style="left:1450px;width:75px">168,6</i><i class="n" style="left:1525px;width:71px">168,6</i><i class="n" style="left:1596px;width:86px">168,6</i><i class="n" style="left:1682px;width:86px">168,6</i><i class="n" style="left:1768px;width:86px">168,6</i></div>
<div class="r" style="top:473px"><i class="n" style="left:0px;width:58px;border-left:0;padding-right:8px">5</i><i style="left:58px;width:96px;padding-left:4px"><b>BAT5</b></i><i style="left:154px;width:705px;padding-left:4px"><span style="display:block;width:697px;overflow:hidden;letter-spacing:-0.005px">Peinture vitrerie</span></i><i class="n" style="left:859px;width:88px">177,9</i><i class="n" style="left:947px;width:89px">177,9</i><i class="n" style="left:1036px;width:86px">177,9</i><i class="n" style="left:1122px;width:84px">177,9</i><i class="n" style="left:1206px;width:84px">177,9</i><i class="n" style="left:1290px;width:86px">177,9</i><i class="n" style="left:1376px;width:74px">177,9</i><i class="n" style="left:1450px;width:75px">177,9</i><i class="n" style="left:1525px;width:71px">177,9</i><i class="n" style="left:1596px;width:86px">177,9</i><i class="n" style="left:1682px;width:86px">177,9</i><i class="n" style="left:1768px;width:86px">177,9</i></div>
<div class="r o" style="top:504px"><i class="n" style="left:0px;width:58px;border-left:0;padding-right:8px">6</i><i style="left:58px;width:96px;padding-left:4px"><b>BAT6</b></i><i style="left:154px;width:705px;padding-left:4px"><span style="display:block;width:697px;overflow:hidden;letter-spacing:-0.005px">Index global bâtiment tout corps d'état</span></i><i class="n" style="left:859px;width:88px">202,6</i><i class="n B" style="left:947px;width:89px">202,4</i><i class="n R" style="left:1036px;width:86px">202,8</i><i class="n R" style="left:1122px;width:84px">204,9</i><i class="n B" style="left:1206px;width:84px">204,8</i><i class="n B" style="left:1290px;width:86px">204,4</i><i class="n R" style="left:1376px;width:74px">204,5</i><i class="n R" style="left:1450px;width:75px">204,6</i><i class="n R" style="left:1525px;width:71px">205,4</i><i class="n R" style="left:1596px;width:86px">207,6</i><i class="n R" style="left:1682px;width:86px">207,8</i><i class="n B" style="left:1768px;width:86px">207,2</i></div>
<div class="g" style="top:535px"><u></u><b>Reconnaissances geologiques et geotechniques et forages d'eau</b><em>{ Global }</em></div>
<div class="r" style="top:570px"><i class="n" style="left:0px;width:58px;border-left:0;padding-right:8px">1</i><i style="left:58px;width:96px;padding-left:4px"><b>SF1</b></i><i style="left:154px;width:705px;padding-left:4px"><span style="display:block;width:697px;overflow:hidden;letter-spacing:-0.005px">Reconnaissances géologiques et forages d'eau</span></i><i class="n" style="left:859px;width:88px">177,9</i><i class="n" style="left:947px;width:89px">177,9</i><i class="n" style="left:1036px;width:86px">177,9</i><i class="n" style="left:1122px;width:84px">177,9</i><i class="n" style="left:1206px;width:84px">177,9</i><i class="n" style="left:1290px;width:86px">177,9</i><i class="n" style="left:1376px;width:74px">177,9</i><i class="n" style="left:1450px;width:75px">177,9</i><i class="n" style="left:1525px;width:71px">177,9</i><i class="n" style="left:1596px;width:86px">177,9</i><i class="n" style="left:1682px;width:86px">177,9</i><i class="n" style="left:1768px;width:86px">177,9</i></div>
<div class="r o" style="top:601px"><i class="n" style="left:0px;width:58px;border-left:0;padding-right:8px">2</i><i style="left:58px;width:96px;padding-left:4px"><b>SF2</b></i><i style="left:154px;width:705px;padding-left:4px"><span style="display:block;width:697px;overflow:hidden;letter-spacing:-0.005px">Sondages de reconnaissances hydrogéologiques</span></i><i class="n" style="left:859px;width:88px">170,6</i><i class="n" style="left:947px;width:89px">170,6</i><i class="n" style="left:1036px;width:86px">170,6</i><i class="n" style="left:1122px;width:84px">170,6</i><i class="n" style="left:1206px;width:84px">170,6</i><i class="n" style="left:1290px;width:86px">170,6</i><i class="n" style="left:1376px;width:74px">170,6</i><i class="n" style="left:1450px;width:75px">170,6</i><i class="n" style="left:1525px;width:71px">170,6</i><i class="n" style="left:1596px;width:86px">170,6</i><i class="n" style="left:1682px;width:86px">170,6</i><i class="n" style="left:1768px;width:86px">170,6</i></div>
<div class="r" style="top:632px"><i class="n" style="left:0px;width:58px;border-left:0;padding-right:8px">3</i><i style="left:58px;width:96px;padding-left:4px"><b>SF3</b></i><i style="left:154px;width:705px;padding-left:4px"><span style="display:block;width:697px;overflow:hidden;letter-spacing:-0.005px">Forages d'essai et d'exploitation</span></i><i class="n" style="left:859px;width:88px">160,0</i><i class="n" style="left:947px;width:89px">160,0</i><i class="n" style="left:1036px;width:86px">160,0</i><i class="n" style="left:1122px;width:84px">160,0</i><i class="n" style="left:1206px;width:84px">160,0</i><i class="n" style="left:1290px;width:86px">160,0</i><i class="n" style="left:1376px;width:74px">160,0</i><i class="n" style="left:1450px;width:75px">160,0</i><i class="n" style="left:1525px;width:71px">160,0</i><i class="n" style="left:1596px;width:86px">160,0</i><i class="n" style="left:1682px;width:86px">160,0</i><i class="n" style="left:1768px;width:86px">160,0</i></div>
<div class="r o" style="top:663px"><i class="n" style="left:0px;width:58px;border-left:0;padding-right:8px">4</i><i style="left:58px;width:96px;padding-left:4px"><b>SF4</b></i><i style="left:154px;width:705px;padding-left:4px"><span style="display:block;width:697px;overflow:hidden;letter-spacing:-0.005px">Forage profonds</span></i><i class="n" style="left:859px;width:88px">176,9</i><i class="n" style="left:947px;width:89px">176,9</i><i class="n" style="left:1036px;width:86px">176,9</i><i class="n" style="left:1122px;width:84px">176,9</i><i class="n" style="left:1206px;width:84px">176,9</i><i class="n" style="left:1290px;width:86px">176,9</i><i class="n" style="left:1376px;width:74px">176,9</i><i class="n" style="left:1450px;width:75px">176,9</i><i class="n" style="left:1525px;width:71px">176,9</i><i class="n" style="left:1596px;width:86px">176,9</i><i class="n" style="left:1682px;width:86px">176,9</i><i class="n" style="left:1768px;width:86px">176,9</i></div>
<div class="r" style="top:694px"><i class="n" style="left:0px;width:58px;border-left:0;padding-right:8px">5</i><i style="left:58px;width:96px;padding-left:4px"><b>SF5</b></i><i style="left:154px;width:705px;padding-left:4px"><span style="display:block;width:697px;overflow:hidden;letter-spacing:-0.005px">Fonçage de puits</span></i><i class="n" style="left:859px;width:88px">174,9</i><i class="n" style="left:947px;width:89px">174,9</i><i class="n" style="left:1036px;width:86px">174,9</i><i class="n" style="left:1122px;width:84px">174,9</i><i class="n" style="left:1206px;width:84px">174,9</i><i class="n" style="left:1290px;width:86px">174,9</i><i class="n" style="left:1376px;width:74px">174,9</i><i class="n" style="left:1450px;width:75px">174,9</i><i class="n" style="left:1525px;width:71px">174,9</i><i class="n" style="left:1596px;width:86px">174,9</i><i class="n" style="left:1682px;width:86px">174,9</i><i class="n" style="left:1768px;width:86px">174,9</i></div>
<div class="r o" style="top:725px;border-bottom:0"><i style="left:58px;width:2px"></i><i style="left:154px;width:2px"></i><i style="left:859px;width:2px"></i><i style="left:947px;width:2px"></i><i style="left:1036px;width:2px"></i><i style="left:1122px;width:2px"></i><i style="left:1206px;width:2px"></i><i style="left:1290px;width:2px"></i><i style="left:1376px;width:2px"></i><i style="left:1450px;width:2px"></i><i style="left:1525px;width:2px"></i><i style="left:1596px;width:2px"></i><i style="left:1682px;width:2px"></i><i style="left:1768px;width:2px"></i></div>
</div>
<div class="t" id="wm1" style="left:1468px;top:927.5px;font-size:25px;color:rgba(120,120,120,0.62);letter-spacing:0px">Activer Windows</div>
<div class="t" id="wm2" style="left:1469px;top:961.3px;font-size:17px;color:rgba(120,120,120,0.62);letter-spacing:0.3px">Accédez aux paramètres pour activer Windows.</div><div class="a" id="taskbar"></div>
<svg class="a" style="left:20px;top:1046px" width="20" height="20" viewBox="0 0 20 20" fill="#fff"><path d="M0 2.8L8.2 1.7v7.8H0zM9.2 1.55L20 0v9.5H9.2zM0 10.5h8.2v7.8L0 17.2zM9.2 10.5H20V20L9.2 18.45z"/></svg>
<div class="a" style="left:60px;top:1030px;width:430px;height:50px;background:#353535"></div>
<svg class="a" style="left:71px;top:1041px" width="28" height="28" viewBox="0 0 28 28"><circle cx="14" cy="14" r="11.9" fill="none" stroke="#f8f8f8" stroke-width="3"/></svg>
<div class="t" style="left:110px;top:1047px;font-size:18px;color:#c2c2c2;letter-spacing:-0.32px">Taper ici pour rechercher</div>
<svg class="a" style="left:455px;top:1043px" width="20" height="24" viewBox="455 1043 20 24" fill="none" stroke="#a9a9a9" stroke-width="1.500"><rect x="460.500" y="1045.600" width="8" height="13.600" rx="1.600"/><path d="M457.800 1055.200v2.600a5 5 0 0 0 5 5h3.400a5 5 0 0 0 5-5v-2.600M464.500 1062.800v2M461 1064.600h7"/></svg>
<svg class="a" style="left:506px;top:1044px" width="28" height="22" viewBox="506 1044 28 22" fill="none" stroke="#fff" stroke-width="1.300"><rect x="512.650" y="1046.550" width="14.700" height="16.700"/><path d="M510.500 1049.650h-2v10.700h2M529.500 1049.650h2v10.700h-2"/></svg>
<svg class="a" style="left:570px;top:1041px" width="28" height="28" viewBox="0 0 28 28"><path d="M1.5 12.5C2.5 5.5 8 1 14.5 1c7 0 11.5 5 11.5 12v3H9.5c.3 4 3.5 6 7.5 6 3 0 5.500-.8 7.500-2v5.500C22 27 19 27.500 16 27.500 8.500 27.500 3.500 23 3.500 16c0-4 2-7.500 5.500-9.500C7 8 6 10 5.500 12.500zM9.600 11.500h9.400c0-3-1.800-5-4.600-5-2.600 0-4.500 2-4.800 5z" fill="#0a78d7"/></svg>
<svg class="a" style="left:630px;top:1039px" width="31" height="31" viewBox="0 0 31 31"><path d="M9.500 8V6.500a6 6 0 0 1 12 0V8" fill="none" stroke="#fff" stroke-width="1.600"/><path d="M1 8h29v20.500a1.500 1.500 0 0 1-1.500 1.500h-26a1.500 1.500 0 0 1-1.500-1.500z" fill="#fff"/><rect x="9" y="12.500" width="6" height="6" fill="#f25022"/><rect x="16" y="12.500" width="6" height="6" fill="#7fba00"/><rect x="9" y="19.500" width="6" height="6" fill="#00a4ef"/><rect x="16" y="19.500" width="6" height="6" fill="#ffb900"/></svg>
<svg class="a" style="left:692px;top:1041px" width="32" height="26" viewBox="692 1041 32 26"><path d="M693 1049.600L708 1042.200 723 1049.600V1066H693z" fill="#fff"/><path d="M693.600 1050.300H722.400L711.400 1056.300 717.400 1062.200 707.500 1057z" fill="#02040b"/></svg>
<svg class="a" style="left:754px;top:1039px" width="32" height="32" viewBox="754 1039 32 32"><defs><linearGradient id="sg" x1="1" y1="0" x2="0" y2="1"><stop offset="0" stop-color="#10a850"/><stop offset="0.300" stop-color="#58d020"/><stop offset="0.520" stop-color="#f0e018"/><stop offset="0.750" stop-color="#f08010"/><stop offset="1" stop-color="#e01808"/></linearGradient><linearGradient id="sg2" x1="0" y1="0" x2="1" y2="0"><stop offset="0" stop-color="#10c0b0"/><stop offset="1" stop-color="#1038d8"/></linearGradient></defs>
<rect x="758.800" y="1040.500" width="25.600" height="28.500" fill="#16181c"/>
<g fill="#3c4046"><rect x="759.600" y="1054" width="1.600" height="2"/><rect x="759.600" y="1058" width="1.600" height="2"/><rect x="759.600" y="1062" width="1.600" height="2"/><rect x="759.600" y="1066" width="1.600" height="2"/><rect x="781.500" y="1042" width="1.600" height="2"/><rect x="781.500" y="1046" width="1.600" height="2"/><rect x="781.500" y="1050" width="1.600" height="2"/><rect x="781.500" y="1054" width="1.600" height="2"/><rect x="781.500" y="1058" width="1.600" height="2"/><rect x="781.500" y="1062" width="1.600" height="2"/><rect x="781.500" y="1066" width="1.600" height="2"/></g>
<rect x="762" y="1040.500" width="18" height="4" fill="url(#sg2)"/><rect x="762" y="1052.500" width="18" height="16.500" fill="url(#sg)"/>
<rect x="755.600" y="1044.400" width="23.600" height="8" fill="#2a2c30" stroke="#9a9a9a" stroke-width="0.700"/><text x="767.400" y="1051" font-family="Liberation Sans" font-size="7.500" fill="#f4f4f4" text-anchor="middle" textLength="21" lengthAdjust="spacingAndGlyphs">Studio</text></svg>
<div class="a" style="left:817px;top:1040px;width:30px;height:30px;background:#000"></div>
<svg class="a" style="left:817px;top:1040px" width="30" height="30" viewBox="817 1040 30 30" fill="none" stroke="#f7c600" stroke-width="2.900" stroke-linejoin="miter" stroke-linecap="butt"><path d="M823.300 1047.800Q824.600 1042.200 830.200 1042.200L832.200 1042.200L832.200 1048.700L821.400 1056L821.400 1064.600L832.200 1060.600L832.200 1055.500"/><path d="M835.400 1046.200Q840.800 1043.700 842.600 1047Q843.500 1050.600 837.500 1052.600L822 1057M837.500 1052.600Q843.400 1054.800 842.800 1060.100Q841.600 1066 831.600 1068.400"/></svg>
<svg class="a" style="left:880px;top:1039px" width="28" height="32" viewBox="880 1039 28 32"><defs><linearGradient id="pgd" x1="0" y1="0" x2="1" y2="0"><stop offset="0" stop-color="#fff27a"/><stop offset="0.450" stop-color="#f4cc10"/><stop offset="1" stop-color="#8a6a00"/></linearGradient></defs>
<text x="880.500" y="1066.300" font-family="Liberation Serif" font-weight="bold" font-size="38" fill="url(#pgd)" textLength="22.500" lengthAdjust="spacingAndGlyphs">P</text>
<path d="M887 1059.500l8.500 1.500 7-4.800 3 8-8.500 4.800-7.500-1.500z" fill="#cfdde8" stroke="#8aa0b8" stroke-width="0.700"/><path d="M895.500 1061l2 8" stroke="#7088a0" stroke-width="0.800"/><path d="M890 1062l4 .800M890.800 1064.400l4 .800M898.500 1061.500l3.500-2.200" stroke="#6aa0d0" stroke-width="0.800"/></svg>
<svg class="a" style="left:941px;top:1040px" width="30" height="30" viewBox="941 1040 30 30"><defs><linearGradient id="xg" x1="0" y1="0" x2="0" y2="1"><stop offset="0" stop-color="#f8a468"/><stop offset="0.140" stop-color="#f07a20"/><stop offset="1" stop-color="#e96c12"/></linearGradient></defs><rect x="941.200" y="1040.200" width="29.600" height="29.600" rx="3.200" fill="url(#xg)"/>
<g fill="#fff"><circle cx="949.600" cy="1049" r="5"/><circle cx="962.400" cy="1049" r="5"/><circle cx="949.600" cy="1061" r="5"/><circle cx="962.400" cy="1061" r="5"/><rect x="947" y="1046.500" width="18" height="17"/><rect x="945.600" y="1050" width="20.800" height="10"/></g>
<g fill="none" stroke="#ee7a24" stroke-width="2" stroke-linecap="round"><path d="M950.600 1051.500c.8 2.600 3 3.500 5.400 3.500s4.600-.9 5.400-3.500"/><path d="M950.600 1059.800c.8-2.600 3-3.500 5.400-3.500s4.600.9 5.400 3.500"/></g>
<circle cx="949.800" cy="1049.800" r="1.300" fill="#ee7a24"/><circle cx="962.200" cy="1049.800" r="1.300" fill="#ee7a24"/></svg>
<svg class="a" style="left:1003px;top:1040px" width="30" height="30" viewBox="0 0 30 30"><defs><linearGradient id="og" x1="0" y1="0" x2="1" y2="1"><stop offset="0" stop-color="#ff2838"/><stop offset="0.600" stop-color="#e8101c"/><stop offset="1" stop-color="#a80810"/></linearGradient></defs><ellipse cx="14.800" cy="14.500" rx="14.400" ry="14.500" fill="url(#og)"/><ellipse cx="14.500" cy="15" rx="6.900" ry="10.500" fill="#02040b"/></svg>
<svg class="a" style="left:1064px;top:1038px" width="32" height="34" viewBox="1064 1038 32 34"><defs><linearGradient id="rg" x1="0" y1="0" x2="1" y2="0.300"><stop offset="0" stop-color="#0a1ec8"/><stop offset="0.450" stop-color="#1a34d8"/><stop offset="0.550" stop-color="#8098f0"/><stop offset="1" stop-color="#b8c8f8"/></linearGradient><linearGradient id="sv" x1="0" y1="0" x2="0" y2="1"><stop offset="0" stop-color="#f2f2f2"/><stop offset="1" stop-color="#a8a8a8"/></linearGradient></defs>
<ellipse cx="1076.900" cy="1064.800" rx="5.800" ry="3.200" fill="url(#sv)"/><path d="M1074.500 1058.500l5.500 .600-.400 5h-4.600z" fill="#b4b4b4"/>
<path d="M1067.200 1040.100L1092.200 1043.500L1090.600 1059.800L1066 1057.200Z" fill="#b9bec6"/><path d="M1068.600 1041.800L1090.600 1044.800L1089.300 1058.200L1067.500 1055.800Z" fill="url(#rg)"/>
<circle cx="1087.750" cy="1062.600" r="7" fill="#e4e4e4"/><circle cx="1087.750" cy="1062.600" r="5.800" fill="#cfd2d4"/><path d="M1084.600 1060.200l2.400 2.400-2.400 2.400M1090.900 1060.200l-2.400 2.400 2.400 2.400" stroke="#2a9a38" stroke-width="1.600" fill="none"/></svg>
<svg class="a" style="left:1127px;top:1042px" width="30" height="25" viewBox="1127 1042 30 25"><path d="M1128 1044.200a1.200 1.200 0 0 1 1.200-1.200h9.300l2 2.300h14.900v19.700H1128z" fill="#f4c84a"/><rect x="1128" y="1045.700" width="27.400" height="19.300" rx="0.800" fill="#fbe29a"/><rect x="1130.500" y="1044" width="6" height="1.300" fill="#fff"/><rect x="1130.500" y="1044" width="1.300" height="1.300" fill="#2aa0e8"/>
<path d="M1133 1056.500a1.500 1.500 0 0 1 1.500-1.500h14.600a1.500 1.500 0 0 1 1.500 1.500v9.300h-4.100v-6.500h-9v6.500H1133z" fill="#2cb0ee"/></svg>
<svg class="a" style="left:1187px;top:1038px" width="33" height="34" viewBox="1187 1038 33 34"><ellipse cx="1205" cy="1065.500" rx="8" ry="3.200" fill="url(#sv)"/><path d="M1201.500 1059l7 .600-.500 5.500h-6z" fill="#b0b0b0"/>
<path d="M1193.750 1040.100L1217.900 1042.600L1216.250 1060.100L1192.500 1058.250Z" fill="#c0c5cc"/><path d="M1195.200 1041.800L1216.300 1044L1214.900 1058.500L1194 1056.800Z" fill="#1228c8"/><path d="M1206 1043l10.300 1-1.400 14.500-4-.300z" fill="#5a74e8" opacity="0.600"/>
<path d="M1189 1044.500L1212.500 1046.750L1212.250 1055.100L1189 1054.250Z" fill="#58a8ec" stroke="#c8d8e8" stroke-width="0.600"/>
<g stroke="#fff" stroke-width="1.100" stroke-dasharray="1.400 0.900"><path d="M1190.500 1046.800l20.500 1.900M1190.500 1049l20.500 1.500M1190.500 1051.200l20.500 1.200"/></g><path d="M1194 1053l13 .500" stroke="#fff" stroke-width="1"/></svg>
<svg class="a" style="left:1249px;top:1038px" width="33" height="32" viewBox="1249 1038 33 32"><defs><linearGradient id="wg" x1="0" y1="0" x2="1" y2="0"><stop offset="0" stop-color="#2c5cb4"/><stop offset="0.300" stop-color="#5a8ad4"/><stop offset="0.550" stop-color="#dce8f8"/><stop offset="1" stop-color="#f2f6fc"/></linearGradient></defs>
<path d="M1261 1040.300L1279.750 1043.900L1278.100 1067.600L1251.250 1064.750L1251.250 1048Q1252 1041 1261 1040.300Z" fill="url(#wg)" stroke="#90a8cc" stroke-width="0.600"/>
<path d="M1261 1040.300L1276 1039.800L1279.750 1043.900Z" fill="#b8cce8"/>
<text x="1260.800" y="1052.600" font-family="Liberation Serif" font-style="italic" font-weight="bold" font-size="12.500" fill="#2a56b0" transform="rotate(6 1261 1052)">W</text>
<g stroke="#2a56b0" stroke-width="1.300"><path d="M1272.500 1047.200l5 .600M1272.300 1049.800l5 .600M1272.100 1052.400l5 .600M1260 1054.800l17 1.800M1260 1057.800l17 1.800M1260 1060.800l17 1.800"/></g></svg>
<div class="a" style="left:1298px;top:1030px;width:61px;height:50px;background:#35383c"></div>
<svg class="a" style="left:1312px;top:1040px" width="34" height="30" viewBox="1312 1040 34 30"><g fill="#4a8ccc" transform="translate(1329 1057)"><path d="M-11 0a11 11 0 0 1 22 0h-6a5 5 0 0 0-10 0z"/>
<rect x="-2.700" y="-15" width="5.400" height="5.700" rx="1" transform="rotate(-78)"/><rect x="-2.700" y="-15" width="5.400" height="5.700" rx="1" transform="rotate(-40)"/><rect x="-2.700" y="-15" width="5.400" height="5.700" rx="1" transform="rotate(0)"/><rect x="-2.700" y="-15" width="5.400" height="5.700" rx="1" transform="rotate(40)"/><rect x="-2.700" y="-15" width="5.400" height="5.700" rx="1" transform="rotate(78)"/></g>
<text x="1328.500" y="1067" font-family="Liberation Sans" font-weight="bold" font-style="italic" font-size="16.500" text-anchor="middle" fill="#fbbe10" stroke="#0c0c10" stroke-width="1.600" paint-order="stroke" textLength="27" lengthAdjust="spacingAndGlyphs">WD</text></svg>
<svg class="a" style="left:1375px;top:1040px" width="30" height="28" viewBox="1375 1040 30 28"><rect x="1376.900" y="1041.400" width="25.600" height="24.800" fill="#200000" stroke="#f01c0a" stroke-width="1.800"/><path d="M1382 1062c-.8-1.600 1.500-3 3.500-4 2.200-3.500 3.800-8 3.600-11.200-.1-1.600 1.600-1.700 1.700 0 .2 3.200 1.500 6.800 3.800 9.300 1.800 0 3.800.3 3.800 1.500s-2 1.200-3.800-.6c-3-.1-6.500.8-9.100 2-1.200 2-2.700 3.700-3.500 3z" fill="none" stroke="#f2eeee" stroke-width="1"/></svg>
<div class="a" style="left:807px;top:1077px;width:51px;height:3px;background:#76b9ed"></div>
<div class="a" style="left:993px;top:1077px;width:51px;height:3px;background:#76b9ed"></div>
<div class="a" style="left:1117px;top:1077px;width:40px;height:3px;background:#76b9ed"></div>
<div class="a" style="left:1241px;top:1077px;width:51px;height:3px;background:#76b9ed"></div>
<div class="a" style="left:1298px;top:1077px;width:61px;height:3px;background:#76b9ed"></div>
<div class="a" style="left:1365px;top:1077px;width:51px;height:3px;background:#76b9ed"></div>
<div class="a" style="left:1157px;top:1077px;width:11px;height:3px;background:#5a8fbd"></div>
<svg class="a" style="left:1633px;top:1049px" width="18" height="11" viewBox="0 0 18 11"><path d="M1 9.700L9 1.700l8 8" fill="none" stroke="#f0f0f0" stroke-width="1.300"/></svg>
<svg class="a" style="left:1661px;top:1046px" width="23" height="16" viewBox="0 0 23 16" fill="none" stroke="#f0f0f0" stroke-width="1.100"><rect x="4.500" y="4.500" width="15.500" height="10"/><rect x="6.500" y="6.500" width="11.500" height="6" fill="#f0f0f0" stroke="none"/><path d="M20 7.500h1.500v4H20"/><path d="M1.500 2v3M4 2v3M0.800 5h4v2.500a2 2 0 0 1-2 2v5" /></svg>
<svg class="a" style="left:1691px;top:1046px" width="22" height="18" viewBox="0 0 22 18" fill="none" stroke="#f0f0f0" stroke-width="1.100"><path d="M1 6h3.500l4-4v14l-4-4H1z"/><path d="M11 6.500a4 4 0 0 1 0 5M13.500 4.500a7 7 0 0 1 0 9" /><path d="M16.500 2.500a10 10 0 0 1 0 13" stroke="#888"/></svg>
<div class="t" style="left:1726px;top:1048px;font-size:14.2px;color:#f0f0f0;letter-spacing:-0.3px;transform:scaleX(0.9);transform-origin:0 0">FRA</div>
<div class="t" style="left:1790px;top:1036.6px;font-size:14.500px;color:#f0f0f0;letter-spacing:-0.35px">05:09</div>
<div class="t" style="left:1771.5px;top:1060px;font-size:14.500px;color:#f0f0f0;letter-spacing:0.15px">14/06/2018</div>
<svg class="a" style="left:1868px;top:1044px" width="22" height="23" viewBox="0 0 22 23"><path d="M1 1h20v17h-8l-2.500 3-2.500-3H1z" fill="#fff"/><path d="M5 5.500h12M5 9.500h12M5 13.500h8" stroke="#02040b" stroke-width="1.300"/></svg>
<div class="a" style="left:1914px;top:1030px;width:1px;height:50px;background:#5a5a5a"></div>
</body></html>
